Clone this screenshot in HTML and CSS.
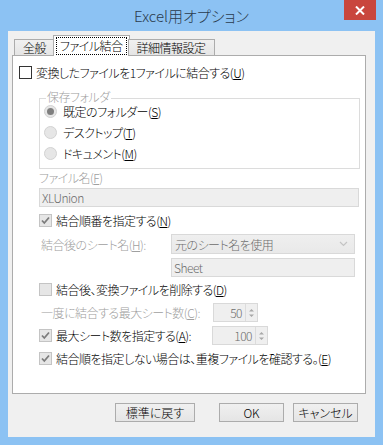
FILE: index.html
```html
<!DOCTYPE html>
<html lang="ja">
<head>
  <meta charset="UTF-8" />
  <title>Excel用オプション</title>
  <link rel="stylesheet" href="styles.css">
</head>
<body>
  <div class="window">
    <div class="titlebar">
      <span class="title">Excel用オプション</span>
      <div class="close-button">
        <svg width="10" height="9" viewBox="0 0 10 9"><path d="M1 0.5 L9 8.5 M9 0.5 L1 8.5" stroke="#fff" stroke-width="2"/></svg>
      </div>
    </div>

    <div class="client">
      <div class="tabs">
        <div class="tab">全般</div>
        <div class="tab active"><span class="focus">ファイル結合</span></div>
        <div class="tab">詳細情報設定</div>
      </div>

      <div class="panel">
        <label class="check-row main-row">
          <span class="checkbox"></span>
          <span>変換したファイルを1ファイルに結合する(<u>U</u>)</span>
        </label>

        <div class="group">
          <span class="group-title">保存フォルダ</span>
          <div class="radio-row"><span class="radio selected"></span><span>既定のフォルダー(<u>S</u>)</span></div>
          <div class="radio-row"><span class="radio"></span><span>デスクトップ(<u>T</u>)</span></div>
          <div class="radio-row"><span class="radio"></span><span>ドキュメント(<u>M</u>)</span></div>
        </div>

        <div class="field-label">ファイル名(<u>F</u>)</div>
        <div class="textbox wide">XLUnion</div>

        <div class="check-row row-n">
          <span class="checkbox disabled">
            <svg width="11" height="11" viewBox="0 0 11 11"><path d="M2 5.5 L4.3 8 L9 2.5" fill="none" stroke="#7c7c7c" stroke-width="1.8"/></svg>
          </span>
          <span>結合順番を指定する(<u>N</u>)</span>
        </div>

        <div class="field-row row-h">
          <span class="field-name">結合後のシート名(<u>H</u>):</span>
          <div class="combo">
            <span>元のシート名を使用</span>
            <svg width="9" height="6" viewBox="0 0 9 6"><path d="M1 1 L4.5 4.5 L8 1" fill="none" stroke="#c4c4c4" stroke-width="1.2"/></svg>
          </div>
        </div>
        <div class="textbox sheet">Sheet</div>

        <div class="check-row row-d">
          <span class="checkbox disabled"></span>
          <span>結合後、変換ファイルを削除する(<u>D</u>)</span>
        </div>

        <div class="field-row row-c">
          <span class="field-name">一度に結合する最大シート数(<u>C</u>):</span>
          <div class="spin spin-50">
            <span class="spin-value">50</span>
            <span class="spin-arrows">
              <svg width="9" height="14" viewBox="0 0 9 14"><path d="M2 5.5 L4.5 3 L7 5.5 Z M2 8.5 L4.5 11 L7 8.5 Z" fill="#a8a8a8"/></svg>
            </span>
          </div>
        </div>

        <div class="check-row row-a">
          <span class="checkbox disabled">
            <svg width="11" height="11" viewBox="0 0 11 11"><path d="M2 5.5 L4.3 8 L9 2.5" fill="none" stroke="#7c7c7c" stroke-width="1.8"/></svg>
          </span>
          <span class="check-text">最大シート数を指定する(<u>A</u>):</span>
          <div class="spin spin-100">
            <span class="spin-value">100</span>
            <span class="spin-arrows">
              <svg width="9" height="14" viewBox="0 0 9 14"><path d="M2 5.5 L4.5 3 L7 5.5 Z M2 8.5 L4.5 11 L7 8.5 Z" fill="#a8a8a8"/></svg>
            </span>
          </div>
        </div>

        <div class="check-row row-e">
          <span class="checkbox disabled">
            <svg width="11" height="11" viewBox="0 0 11 11"><path d="M2 5.5 L4.3 8 L9 2.5" fill="none" stroke="#7c7c7c" stroke-width="1.8"/></svg>
          </span>
          <span>結合順を指定しない場合は、重複ファイルを確認する。(<u>E</u>)</span>
        </div>
      </div>

      <div class="buttons">
        <button class="btn btn-reset">標準に戻す</button>
        <button class="btn btn-ok">OK</button>
        <button class="btn">キャンセル</button>
      </div>
    </div>
  </div>
</body>
</html>
```

FILE: styles.css
```css
* {
    margin: 0;
    padding: 0;
    box-sizing: border-box;
}
body {
    font-family: "Noto Sans CJK JP", "Noto Sans", sans-serif;
    font-size: 12px;
    font-weight: 300;
    font-feature-settings: "palt";
    letter-spacing: -0.5px;
    color: #000;
    background: #fff;
    white-space: nowrap;
}
u {
    text-decoration: underline;
    text-underline-offset: 1px;
}

/* Window frame */
.window {
    width: 383px;
    height: 445px;
    background: #8cc2f3;
    padding: 0 8px 8px 8px;
    display: flex;
    flex-direction: column;
}
.titlebar {
    position: relative;
    height: 31px;
    display: flex;
    align-items: center;
    justify-content: center;
}
.title {
    font-size: 15px;
    line-height: 30px;
    letter-spacing: 0;
    color: #2a3b4d;
}
.close-button {
    position: absolute;
    top: 0;
    right: -1px;
    width: 32px;
    height: 20px;
    background: #c9463d;
    display: flex;
    align-items: center;
    justify-content: center;
}
.client {
    flex: 1;
    background: #f0f0f0;
    display: flex;
    flex-direction: column;
}

/* Tabs */
.tabs {
    position: relative;
    z-index: 1;
    display: flex;
    align-items: flex-end;
    height: 21px;
    margin: 4px 0 -1px 4px;
    padding-left: 2px;
}
.tab {
    height: 17px;
    padding: 0 8px;
    line-height: 15px;
    border: 1px solid #acacac;
    background: linear-gradient(#f0f0f0, #e5e5e5);
}
.tab + .tab {
    margin-left: -1px;
}
.tab.active {
    height: 21px;
    margin: 0 -2px;
    padding: 1px 2px 0 2px;
    background: #fff;
    border-bottom: none;
}
.tab.active + .tab {
    margin-left: 0;
}
.focus {
    display: block;
    border: 1px dotted #000;
    padding: 0 3px;
    line-height: 16px;
}

/* Tab page */
.panel {
    width: 354px;
    height: 339px;
    margin-left: 4px;
    background: #fff;
    border: 1px solid #acacac;
    display: flex;
    flex-direction: column;
}
.check-row {
    display: flex;
    align-items: center;
    gap: 4px;
    height: 13px;
    line-height: 13px;
    margin-left: 26px;
}
.main-row {
    margin: 9px 0 0 6px;
    height: 15px;
}
.checkbox {
    width: 13px;
    height: 13px;
    border: 1px solid #333;
    background: #fff;
    display: flex;
    align-items: center;
    justify-content: center;
    flex: none;
}
.checkbox.disabled {
    border-color: #c4c4c4;
    background: #e6e6e6;
}

/* Group box */
.group {
    margin: 18px 0 0 26px;
    width: 321px;
    border: 1px solid #dcdcdc;
    padding: 0 0 8px 4px;
    display: flex;
    flex-direction: column;
    gap: 8px;
}
.group-title {
    align-self: flex-start;
    margin: -8px 0 -6px 2px;
    padding: 0 1px;
    line-height: 12px;
    background: #fff;
    color: #a0a0a0;
}
.radio-row {
    display: flex;
    align-items: center;
    gap: 6px;
    height: 13px;
    line-height: 13px;
}
.radio {
    width: 13px;
    height: 13px;
    border-radius: 50%;
    border: 1px solid #d2d2d2;
    background: #e6e6e6;
    display: flex;
    align-items: center;
    justify-content: center;
}
.radio.selected::after {
    content: "";
    width: 7px;
    height: 7px;
    border-radius: 50%;
    background: #7f7f7f;
}

/* Fields */
.field-label {
    margin: 2px 0 0 26px;
    line-height: 14px;
    color: #a0a0a0;
}
.textbox {
    height: 19px;
    border: 1px solid #d9d9d9;
    background: #efefef;
    color: #6d6d6d;
    padding-left: 2px;
    line-height: 17px;
}
.textbox.wide {
    margin: 3px 0 0 26px;
    width: 320px;
}
.textbox.sheet {
    margin: 4px 0 0 158px;
    width: 184px;
}
.row-n {
    margin-top: 7px;
}
.field-row {
    display: flex;
    align-items: center;
    margin-left: 28px;
}
.field-name {
    color: #a0a0a0;
    width: 130px;
    flex: none;
}
.row-h {
    margin-top: 7px;
}
.combo {
    width: 184px;
    height: 20px;
    border: 1px solid #d9d9d9;
    background: linear-gradient(#efefef, #e9e9e9);
    color: #6d6d6d;
    display: flex;
    align-items: center;
    justify-content: space-between;
    padding: 0 6px 0 3px;
}
.row-d {
    margin-top: 6px;
}
.row-c {
    margin-top: 7px;
}
.row-c .field-name {
    width: 172px;
}
.spin {
    height: 19px;
    border: 1px solid #d9d9d9;
    background: #efefef;
    color: #6d6d6d;
    display: flex;
    align-items: center;
    justify-content: flex-end;
    flex: none;
}
.spin-50 {
    width: 45px;
}
.spin-100 {
    width: 56px;
}
.spin-value {
    padding-right: 3px;
}
.spin-arrows {
    width: 12px;
    height: 17px;
    border-left: 1px solid #dcdcdc;
    display: flex;
    align-items: center;
    justify-content: center;
}
.row-a {
    margin-top: 4px;
    height: 19px;
}
.row-a .check-text {
    width: 152px;
    flex: none;
}
.row-e {
    margin-top: 7px;
}

/* Dialog buttons */
.buttons {
    display: flex;
    justify-content: flex-end;
    margin-top: 9px;
    padding-right: 17px;
}
.btn {
    height: 19px;
    width: 65px;
    font-family: inherit;
    font-size: 12px;
    font-weight: 300;
    font-feature-settings: "palt";
    line-height: 17px;
    border: 1px solid #acacac;
    background: linear-gradient(#f0f0f0, #e5e5e5);
    color: #000;
    margin-left: 9px;
}
.btn-reset {
    width: 80px;
}
.btn-ok {
    margin-left: 24px;
}
```
